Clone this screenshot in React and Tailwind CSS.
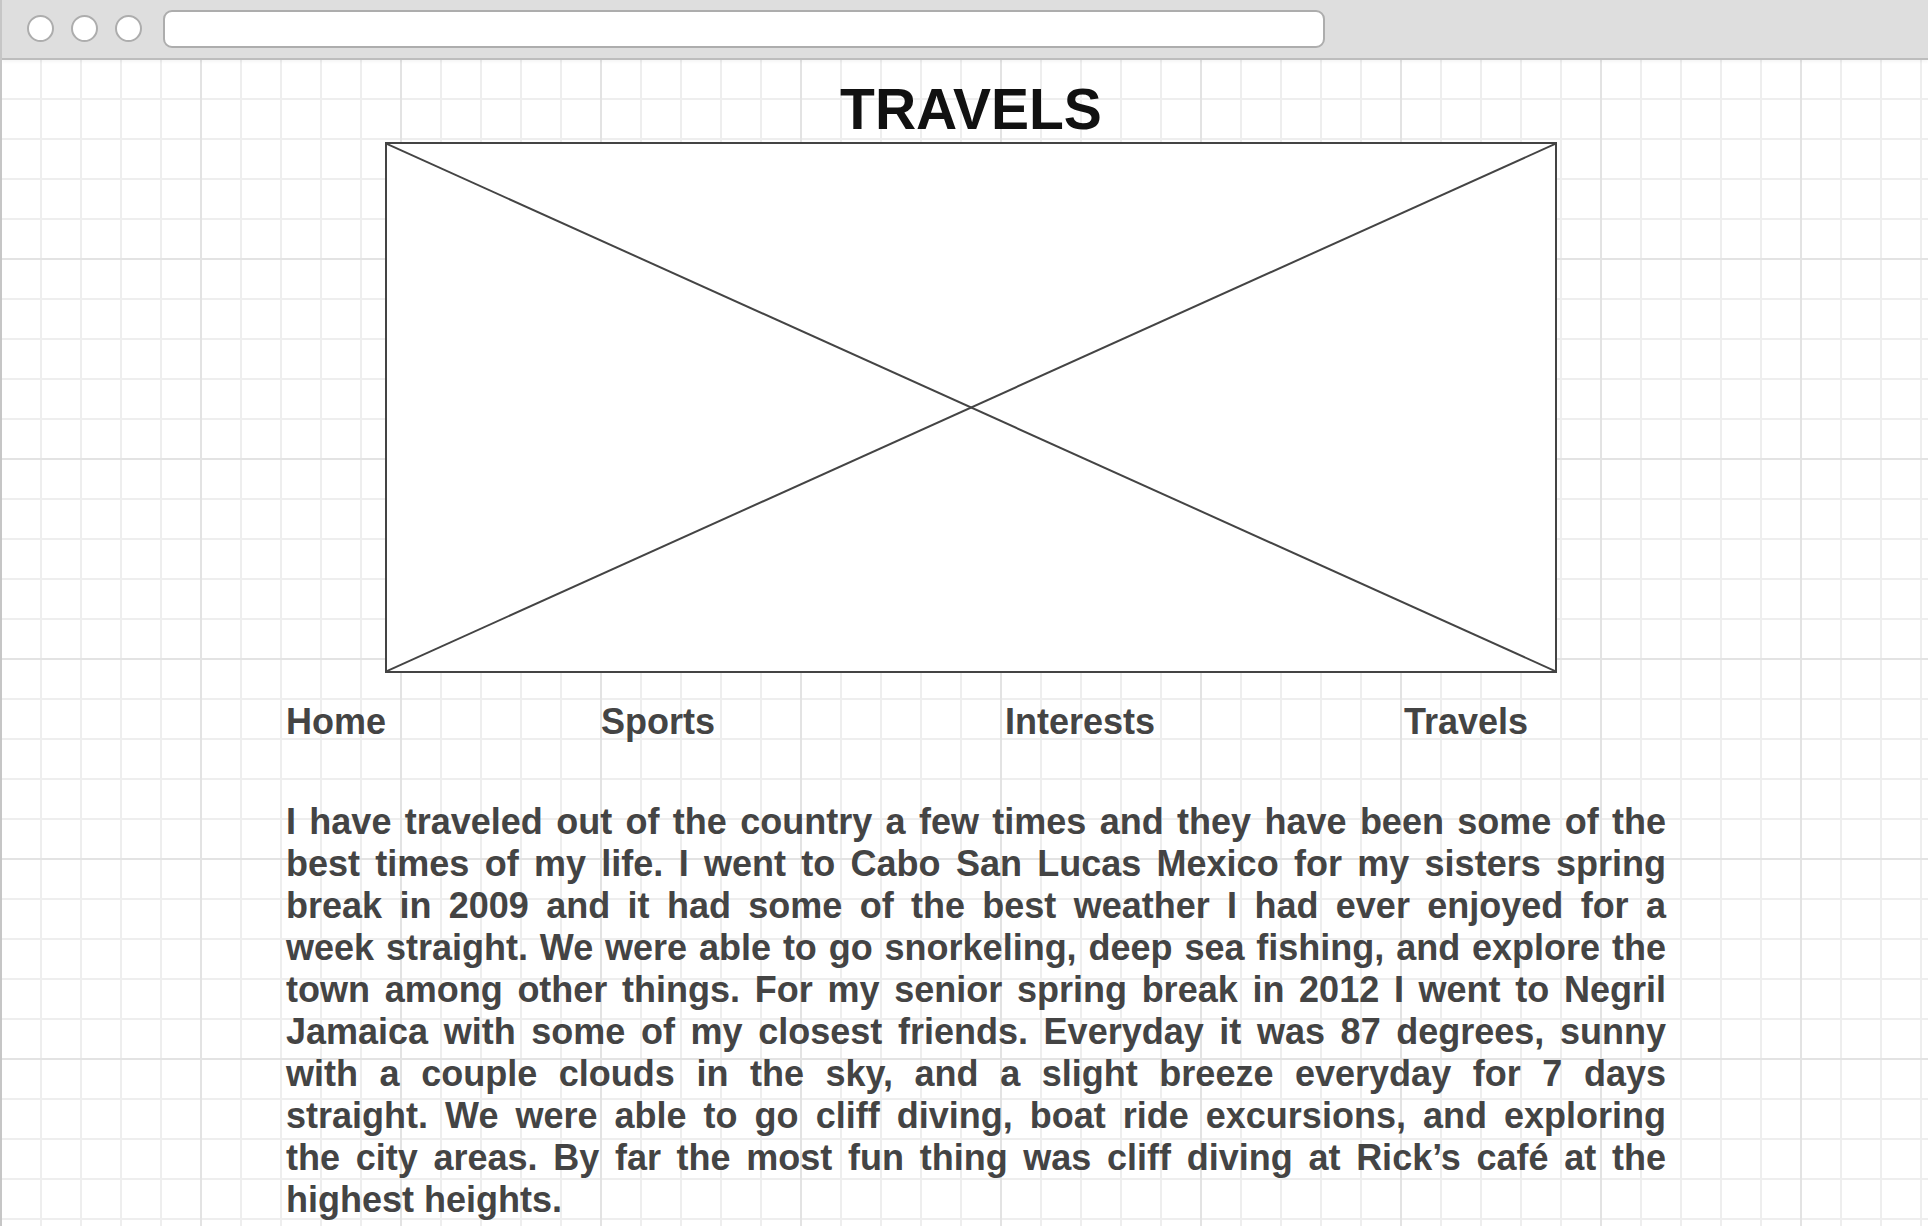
import React from 'react';

const navItems = ['Home', 'Sports', 'Interests', 'Travels'];

// the wireframe breaks the paragraph at these points, so each line is kept as its own justified row
const storyLines = [
  'I have traveled out of the country a few times and they have been some of the',
  'best times of my life. I went to Cabo San Lucas Mexico for my sisters spring',
  'break in 2009 and it had some of the best weather I had ever enjoyed for a',
  'week straight. We were able to go snorkeling, deep sea fishing, and explore the',
  'town among other things. For my senior spring break in 2012 I went to Negril',
  'Jamaica with some of my closest friends. Everyday it was 87 degrees, sunny',
  'with a couple clouds in the sky, and a slight breeze everyday for 7 days',
  'straight. We were able to go cliff diving, boat ride excursions, and exploring',
  'the city areas. By far the most fun thing was cliff diving at Rick\u2019s caf\u00e9 at the',
];

export default function App() {
  return (
    <div className="relative w-[1928px] h-[1226px] overflow-hidden border-l-2 border-[#c6c6c6] bg-white font-['Liberation_Sans',Arial,sans-serif] bg-[linear-gradient(to_right,#e3e3e3_2px,transparent_2px),linear-gradient(to_bottom,#e3e3e3_2px,transparent_2px),linear-gradient(to_right,#eeeeee_2px,transparent_2px),linear-gradient(to_bottom,#eeeeee_2px,transparent_2px)] bg-[size:200px_200px,200px_200px,40px_40px,40px_40px] bg-[position:198px_58px,198px_58px,38px_18px,38px_18px]">
      {/* Browser chrome */}
      <div className="flex h-[60px] items-center pb-[1px] border-b-2 border-[#bdbdbd] bg-[#dedede] shadow-[0_2px_3px_rgba(0,0,0,0.04)]">
        <div className="ml-[25px] flex gap-[17px]">
          <div className="size-[27px] rounded-full border-2 border-[#adadad] bg-white"></div>
          <div className="size-[27px] rounded-full border-2 border-[#adadad] bg-white"></div>
          <div className="size-[27px] rounded-full border-2 border-[#adadad] bg-white"></div>
        </div>
        <div className="ml-[21px] h-[38px] w-[1162px] rounded-[9px] border-2 border-[#adadad] bg-white"></div>
      </div>

      {/* Page */}
      <div className="flex flex-col">
        <h1 className="ml-[383px] mt-[21px] w-[1172px] text-center text-[57px] leading-[56px] font-bold text-[#111111]">
          TRAVELS
        </h1>

        {/* Image placeholder */}
        <div className="ml-[383px] mt-[5px] h-[531px] w-[1172px] border-2 border-[#444444] bg-white">
          <svg className="h-full w-full" viewBox="0 0 100 100" preserveAspectRatio="none">
            <line x1="0" y1="0" x2="100" y2="100" stroke="#444444" strokeWidth="2" vectorEffect="non-scaling-stroke" />
            <line x1="100" y1="0" x2="0" y2="100" stroke="#444444" strokeWidth="2" vectorEffect="non-scaling-stroke" />
          </svg>
        </div>

        {/* Nav */}
        <nav className="ml-[284px] mt-[28px] grid grid-cols-[315px_404px_399px_auto] text-[36px] leading-[42px] font-bold text-[#444444]">
          {navItems.map((item) => (
            <span key={item}>{item}</span>
          ))}
        </nav>

        {/* Story */}
        <p className="ml-[284px] mt-[58px] w-[1380px] text-[36px] leading-[42px] font-bold text-[#444444]">
          {storyLines.map((line, idx) => (
            <span key={idx} className="block text-justify [text-align-last:justify]">
              {line}
            </span>
          ))}
          <span className="block text-left">highest heights.</span>
        </p>
      </div>
    </div>
  );
}
